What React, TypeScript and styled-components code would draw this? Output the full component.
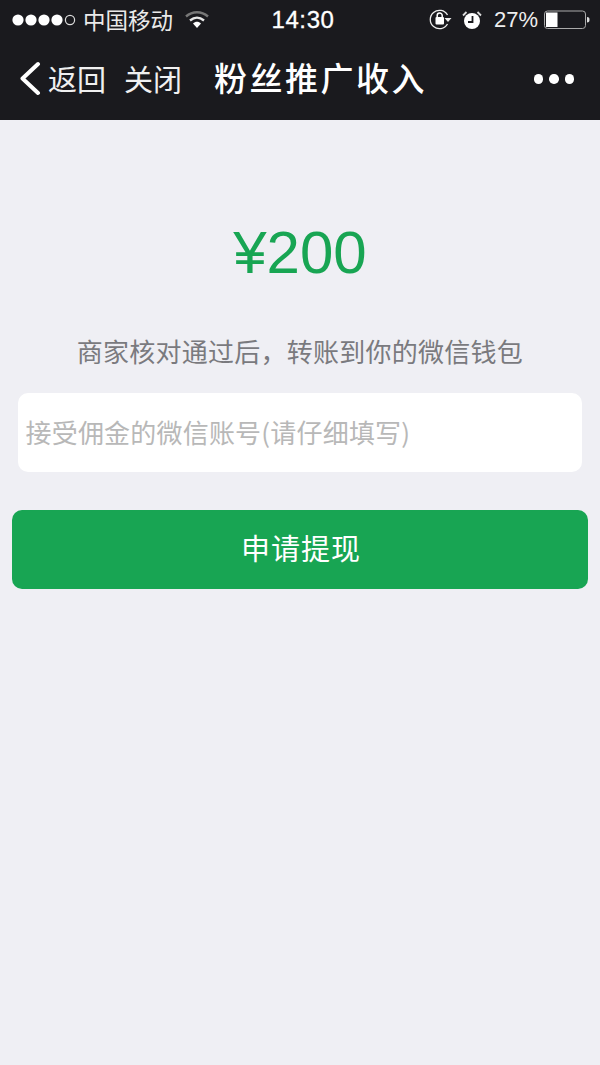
import React from 'react';
import styled, { createGlobalStyle } from 'styled-components';

const GlobalStyle = createGlobalStyle`
  html, body {
    margin: 0;
    padding: 0;
    background-color: #efeff4;
  }
  * {
    box-sizing: border-box;
  }
`;

const FONT = `"Noto Sans CJK SC", "Noto Sans", sans-serif`;
const LATIN = `"Liberation Sans", "Noto Sans CJK SC", sans-serif`;

const Page = styled.div`
  width: 600px;
  height: 1065px;
  background-color: #efeff4;
  font-family: ${FONT};
  overflow: hidden;
`;

const Header = styled.header`
  height: 120px;
  background-color: #1a1a1e;
  color: #fff;
`;

const StatusBar = styled.div`
  height: 40px;
  display: grid;
  grid-template-columns: 1fr auto 1fr;
  align-items: center;
  padding: 0 10px 0 12px;
  font-size: 23px;
`;

const StatusLeft = styled.div`
  display: flex;
  align-items: center;
`;

const StatusRight = styled.div`
  display: flex;
  align-items: center;
  justify-content: flex-end;
`;

const Carrier = styled.span`
  margin: -3px 0 0 7px;
  font-weight: 400;
  font-size: 22.5px;
  color: #eaeaea;
`;

const Time = styled.span`
  margin-left: 4px;
  font-family: ${LATIN};
  font-size: 24px;
  font-weight: 400;
  letter-spacing: 0.6px;
  -webkit-text-stroke: 0.3px #fff;
`;

const Percent = styled.span`
  font-family: ${LATIN};
  font-size: 22px;
  margin: 0 6px 0 12px;
  color: #eee;
`;

const NavBar = styled.nav`
  height: 80px;
  display: flex;
  align-items: center;
  padding: 0 0 2px 20px;
`;

const NavLink = styled.span<{ $gap?: number }>`
  font-size: 29px;
  font-weight: 400;
  margin-left: ${p => p.$gap ?? 0}px;
  margin-top: -2px;
  color: #f0f0f0;
`;

const NavTitle = styled.span`
  font-size: 33px;
  font-weight: 500;
  letter-spacing: 2.5px;
  margin-left: 32px;
  margin-top: -4px;
`;

const MoreDots = styled.div`
  margin-left: auto;
  margin-right: 26px;
  display: flex;
  gap: 6px;
`;

const Dot = styled.i`
  display: block;
  width: 9.5px;
  height: 9.5px;
  border-radius: 50%;
  background-color: #fff;
`;

const Content = styled.main`
  display: flex;
  flex-direction: column;
  align-items: center;
`;

const Amount = styled.div`
  margin-top: 97px;
  height: 72px;
  line-height: 72px;
  font-family: ${LATIN};
  font-size: 60px;
  color: #18a553;
`;

const Hint = styled.p`
  margin: 42px 0 0;
  height: 40px;
  line-height: 40px;
  font-size: 26px;
  font-weight: 400;
  letter-spacing: 0.25px;
  color: #7a7a7e;
`;

const AccountField = styled.div`
  margin-top: 22px;
  width: 564px;
  height: 79px;
  display: flex;
  align-items: center;
  padding: 0 0 2px 7.5px;
  background-color: #fff;
  border-radius: 10px;
  font-size: 26px;
  font-weight: 400;
  letter-spacing: 0.2px;
  color: #b8b8b8;
`;

const WithdrawButton = styled.button`
  margin-top: 38px;
  width: 576px;
  height: 79px;
  padding: 0 0 5px 2px;
  border: 0;
  border-radius: 10px;
  background-color: #18a553;
  color: #fff;
  font-family: ${FONT};
  font-size: 29px;
  font-weight: 400;
  letter-spacing: 1px;
`;

const SignalDots = () => (
  <svg width="64" height="14" viewBox="0 0 64 14">
    {[6, 19, 32, 45].map(cx => (
      <circle key={cx} cx={cx} cy="7" r="5.6" fill="#fff" />
    ))}
    <circle cx="58" cy="7" r="4.6" fill="none" stroke="#ddd" strokeWidth="1.2" />
  </svg>
);

const Wifi = () => (
  <svg width="24" height="18" viewBox="0 0 24 18" style={{ marginLeft: 12 }}>
    <path d="M1 5.5C7.5-.2 16.5-.2 23 5.5" fill="none" stroke="#777" strokeWidth="2.4" />
    <path d="M5 9.5C9.5 5.8 14.5 5.8 19 9.5" fill="none" stroke="#e8e8e8" strokeWidth="2.4" />
    <path d="M8 12.5C10.500 10 13.500 10 16 12.500L12 17Z" fill="#fff" />
  </svg>
);

const RotationLock = () => (
  <svg width="23" height="22" viewBox="0 0 23 22">
    <path d="M18.500 15A9.200 9.200 0 1 1 18.500 6" fill="none" stroke="#eee" strokeWidth="1.300" />
    <path d="M15.500 9h7l-3.500 4Z" fill="#eee" />
    <rect x="6.500" y="8" width="8.500" height="7.500" rx="1" fill="#fff" />
    <path d="M8.200 8V6.500a2.500 2.500 0 0 1 5 0V8" fill="none" stroke="#fff" strokeWidth="1.500" />
  </svg>
);

const Alarm = () => (
  <svg width="20" height="20" viewBox="0 0 20 20" style={{ marginLeft: 10 }}>
    <circle cx="10" cy="11" r="8" fill="#fff" />
    <path d="M10.500 6v6H6" fill="none" stroke="#1a1a1e" strokeWidth="1.800" />
    <path d="M1 5.500 4.500 2M19 5.500 15.500 2" stroke="#ddd" strokeWidth="1.800" />
  </svg>
);

const Battery = () => (
  <svg width="46" height="20" viewBox="0 0 46 20">
    <rect x="0.5" y="1" width="41" height="17.5" rx="3" fill="none" stroke="#aaa" />
    <rect x="2" y="2.5" width="11.5" height="14.5" fill="#fff" />
    <path d="M43 7c2 0 2.500 1 2.500 2.700S45 12.500 43 12.500Z" fill="#ddd" />
  </svg>
);

const BackChevron = () => (
  <svg width="22" height="36" viewBox="0 0 22 36">
    <path d="M18 3 2.500 17.500 18 32" fill="none" stroke="#fff" strokeWidth="4" strokeLinecap="round" strokeLinejoin="round" />
  </svg>
);

const App: React.FC = () => {
  return (
    <Page>
      <GlobalStyle />
      <Header>
        <StatusBar>
          <StatusLeft>
            <SignalDots />
            <Carrier>中国移动</Carrier>
            <Wifi />
          </StatusLeft>
          <Time>14:30</Time>
          <StatusRight>
            <RotationLock />
            <Alarm />
            <Percent>27%</Percent>
            <Battery />
          </StatusRight>
        </StatusBar>
        <NavBar>
          <BackChevron />
          <NavLink $gap={6}>返回</NavLink>
          <NavLink $gap={18}>关闭</NavLink>
          <NavTitle>粉丝推广收入</NavTitle>
          <MoreDots>
            <Dot />
            <Dot />
            <Dot />
          </MoreDots>
        </NavBar>
      </Header>
      <Content>
        <Amount>¥200</Amount>
        <Hint>商家核对通过后，转账到你的微信钱包</Hint>
        <AccountField>接受佣金的微信账号(请仔细填写)</AccountField>
        <WithdrawButton>申请提现</WithdrawButton>
      </Content>
    </Page>
  );
};

export default App;
